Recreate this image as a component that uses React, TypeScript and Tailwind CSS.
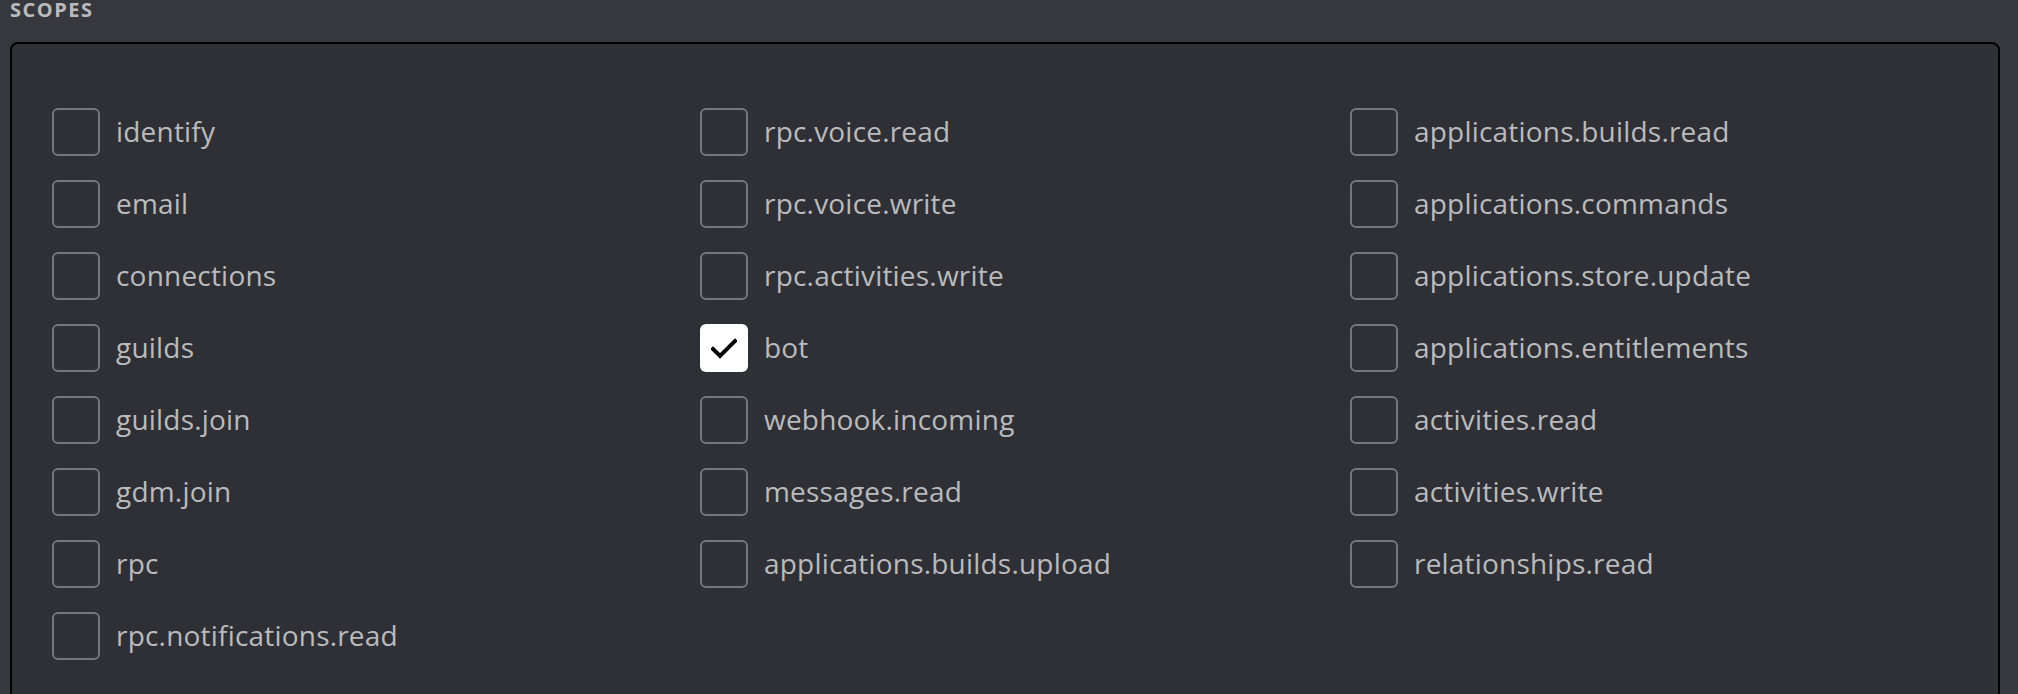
const columns: { name: string; checked?: boolean }[][] = [
  [
    { name: 'identify' },
    { name: 'email' },
    { name: 'connections' },
    { name: 'guilds' },
    { name: 'guilds.join' },
    { name: 'gdm.join' },
    { name: 'rpc' },
    { name: 'rpc.notifications.read' },
  ],
  [
    { name: 'rpc.voice.read' },
    { name: 'rpc.voice.write' },
    { name: 'rpc.activities.write' },
    { name: 'bot', checked: true },
    { name: 'webhook.incoming' },
    { name: 'messages.read' },
    { name: 'applications.builds.upload' },
  ],
  [
    { name: 'applications.builds.read' },
    { name: 'applications.commands' },
    { name: 'applications.store.update' },
    { name: 'applications.entitlements' },
    { name: 'activities.read' },
    { name: 'activities.write' },
    { name: 'relationships.read' },
  ],
];

function Checkbox({ checked }: { checked?: boolean }) {
  if (checked) {
    return (
      <div className="flex h-12 w-12 shrink-0 items-center justify-center rounded-[6px] bg-white">
        <svg width="26" height="22" viewBox="0 0 26 22" fill="none">
          <path d="M2 12 L9 19 L24 4" stroke="#000" strokeWidth="4" strokeLinecap="square" />
        </svg>
      </div>
    );
  }
  return <div className="h-12 w-12 shrink-0 rounded-[6px] border-2 border-[#72767d]" />;
}

export default function App() {
  return (
    <div
      className="h-[694px] overflow-hidden bg-[#37383d]"
      style={{ fontFamily: '"Open Sans", sans-serif' }}
    >
      <div className="pl-[10px] text-[20px] leading-[20px] font-bold uppercase tracking-[1.5px] text-[#b9bbbe]">
        Scopes
      </div>
      <div className="mt-[22px] ml-[10px] mr-[18px] rounded-lg border-2 border-black bg-[#2f3035] pt-[52px] pb-10 pl-10">
        <div className="grid grid-cols-[648px_650px_1fr]">
          {columns.map((col, i) => (
            <div key={i} className="flex flex-col">
              {col.map((item) => (
                <label key={item.name} className="flex h-[72px] items-center gap-4">
                  <Checkbox checked={item.checked} />
                  <span className="mb-[2px] text-[28px] tracking-[0.2px] text-[#b9bbbe]">
                    {item.name}
                  </span>
                </label>
              ))}
            </div>
          ))}
        </div>
      </div>
    </div>
  );
}
